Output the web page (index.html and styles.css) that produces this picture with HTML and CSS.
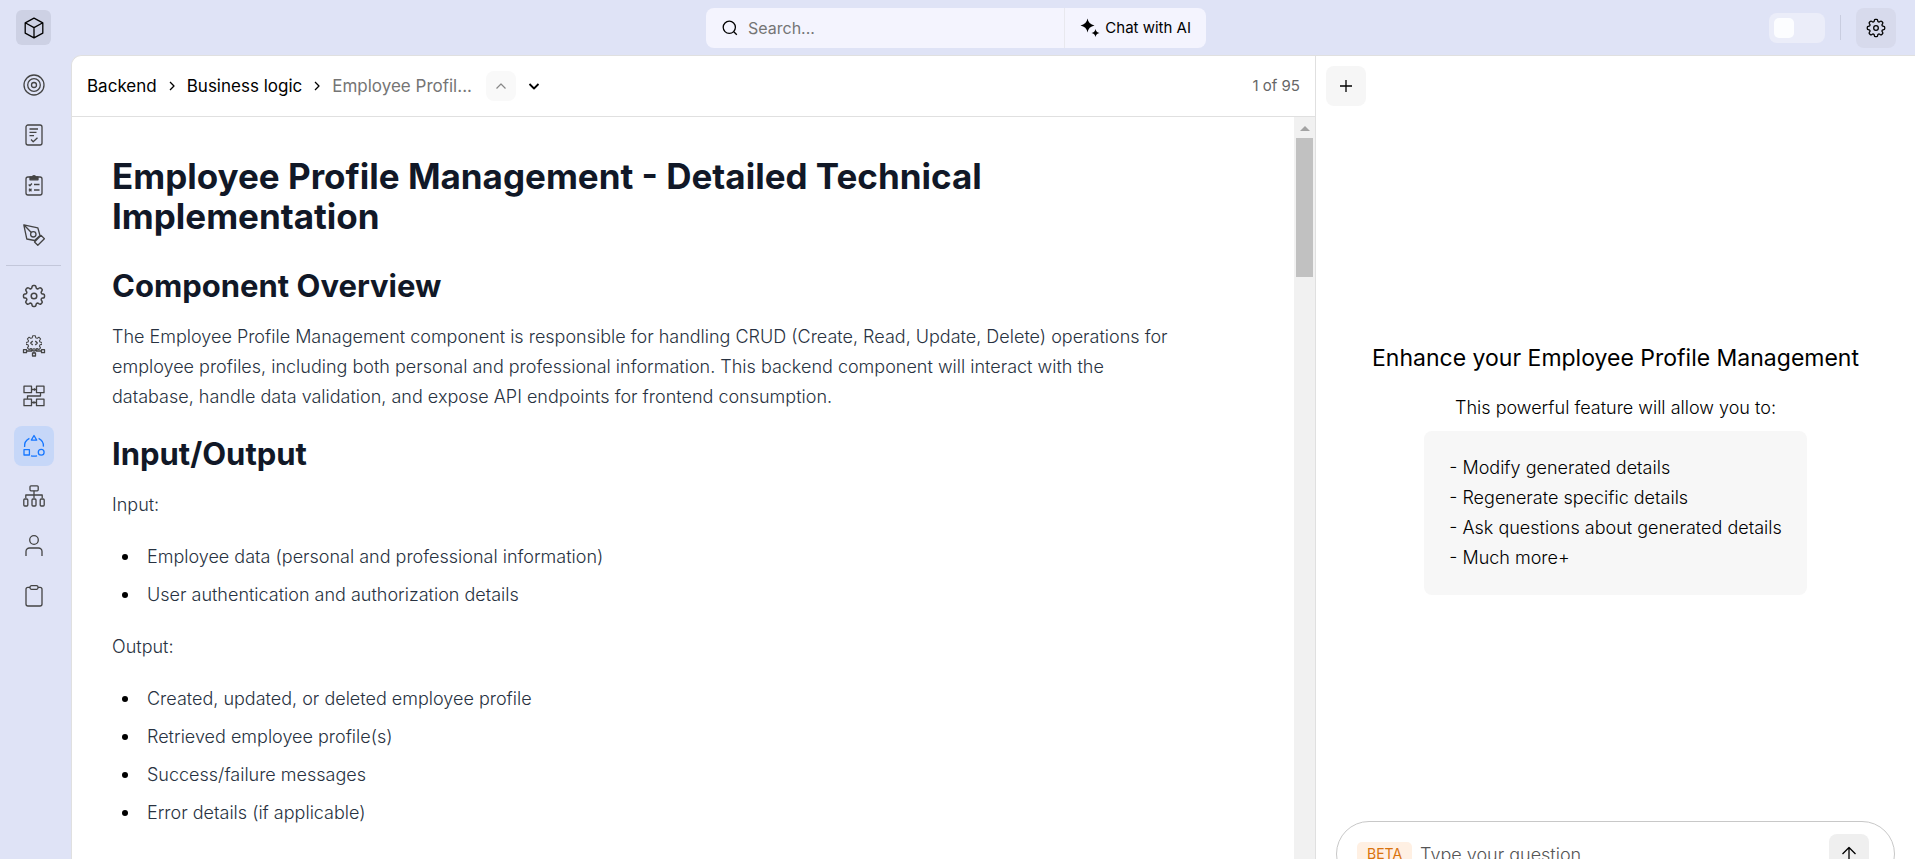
FILE: index.html
```html
<!DOCTYPE html>
<html lang="en">
<head>
    <meta charset="UTF-8">
    <meta name="viewport" content="width=device-width, initial-scale=1.0">
    <title>Employee Profile Management</title>
    <link rel="stylesheet" href="styles.css">
</head>
<body>

<svg class="sprite" aria-hidden="true">
    <symbol id="gear" viewBox="1.7 1.7 20.6 20.6">
        <path d="M10.343 3.94c.09-.542.56-.94 1.11-.94h1.093c.55 0 1.02.398 1.11.94l.149.894c.07.424.384.764.78.93.398.164.855.142 1.205-.108l.737-.527a1.125 1.125 0 011.45.12l.773.774c.39.389.44 1.002.12 1.45l-.527.737c-.25.35-.272.806-.107 1.204.165.397.505.71.93.78l.893.15c.543.09.94.56.94 1.109v1.094c0 .55-.397 1.02-.94 1.11l-.893.149c-.425.07-.765.383-.93.78-.165.398-.143.854.107 1.204l.527.738c.32.447.269 1.06-.12 1.45l-.774.773a1.125 1.125 0 01-1.449.12l-.738-.527c-.35-.25-.806-.272-1.203-.107-.397.165-.71.505-.781.929l-.149.894c-.09.542-.56.94-1.11.94h-1.094c-.55 0-1.019-.398-1.11-.94l-.148-.894c-.071-.424-.384-.764-.781-.93-.398-.164-.854-.142-1.204.108l-.738.527c-.447.32-1.06.269-1.45-.12l-.773-.774a1.125 1.125 0 01-.12-1.45l.527-.737c.25-.35.273-.806.108-1.204-.165-.397-.505-.71-.93-.78l-.894-.15c-.542-.09-.94-.56-.94-1.109v-1.094c0-.55.398-1.02.94-1.11l.894-.149c.424-.07.765-.383.93-.78.165-.398.143-.854-.107-1.204l-.527-.738a1.125 1.125 0 01.12-1.45l.773-.773a1.125 1.125 0 011.45-.12l.737.527c.35.25.807.272 1.204.107.397-.165.71-.505.78-.929l.15-.894z"/>
        <circle cx="12" cy="12" r="2.4"/>
    </symbol>
</svg>

<header class="topbar">
    <a class="logo" href="#" aria-label="Home">
        <svg class="icon" viewBox="0 0 24 24"><path d="M12 2.2l8.800 4.600v10.400L12 21.800l-8.800-4.600V6.800zM3.200 6.800L12 11.600l8.800-4.800M12 11.600v10.200"/></svg>
    </a>
    <div class="search">
        <label class="search-field">
            <svg class="icon-small" viewBox="0 0 16 16"><circle cx="7.3" cy="7.3" r="6.1"/><path d="M11.8 11.8l3 3"/></svg>
            <input type="text" placeholder="Search..." aria-label="Search">
        </label>
        <button class="chat-button">
            <svg class="icon-spark" viewBox="0 0 20 20"><path d="M7.500 .5q1 5.800 7 7q-6 1.200-7 7q-1-5.800-7-7q6-1.200 7-7zM15.500 11q.6 3.400 4 4q-3.400.6-4 4q-.6-3.400-4-4q3.400-.6 4-4z"/></svg>
            Chat with AI
        </button>
    </div>
    <div class="top-actions">
        <input class="toggle" type="checkbox" aria-label="Theme">
        <span class="top-line"></span>
        <button class="settings" aria-label="Settings"><svg class="icon-gear"><use href="#gear"/></svg></button>
    </div>
</header>

<div class="layout">
    <nav class="sidebar">
        <a href="#" aria-label="Goals"><svg class="icon" viewBox="0 0 24 24"><circle cx="12" cy="12" r="10"/><circle cx="12" cy="12" r="6.300"/><circle cx="12" cy="12" r="2.500"/></svg></a>
        <a href="#" aria-label="Requirements"><svg class="icon" viewBox="0 0 24 24"><rect x="4" y="2" width="16" height="20" rx="2"/><path d="M7.500 6h8.500M7.500 9.300h7M7.500 12.600h4.500M9 16.500l2.200 2.200 4.300-4"/></svg></a>
        <a href="#" aria-label="Checklist"><svg class="icon" viewBox="0 0 24 24"><rect x="4" y="4" width="16" height="18" rx="2"/><path class="filled" d="M8 6.800V4h2.200a1.900 1.900 0 0 1 3.600 0H16v2.800z"/><path d="M6.700 11.500l1.200 1.200 2-2.200M12 11.500h5.500M7 15.700l2.500 2.500M9.500 15.700L7 18.200M12 17h5.500"/></svg></a>
        <a href="#" aria-label="Design"><svg class="icon" viewBox="0 0 24 24"><path d="M1.800 1.800l14 3 2.200 7.700-5.400 5-7.800-1.500zM1.800 1.800l7.500 7.700M12.500 19l6.600-6.600 3.300 3.300-6.600 6.600z"/><circle cx="11.300" cy="11.300" r="2.700"/></svg></a>
        <hr>
        <a href="#" aria-label="Configuration"><svg class="icon"><use href="#gear"/></svg></a>
        <a href="#" aria-label="Services"><svg class="icon" viewBox="0 0 24 24"><svg x="4" y="1" width="16" height="16" viewBox="2 2 20 20"><path d="M10.300 3h3.400l.5 2.500 1.700.7 2.200-1.400 2.100 2.100-1.400 2.200.7 1.700 2.500.5v2.400l-2.500.5-.7 1.700 1.400 2.200-2.100 2.100-2.200-1.400-1.700.7-.5 2.500h-3.400l-.5-2.500-1.700-.7-2.200 1.400-2.100-2.100 1.400-2.200-.7-1.700-2.500-.5v-2.400l2.500-.5.7-1.700-1.400-2.200 2.100-2.100 2.200 1.400 1.700-.7z"/></svg><path d="M10.700 7L8.700 9l2 2M13.300 7l2 2-2 2M12 14v5M8.800 15l1.200 2H4.500M15.200 15L14 17h5.500M1.500 15.700h3v3h-3zM19.500 15.700h3v3h-3zM10.500 19h3v3h-3z"/></svg></a>
        <a href="#" aria-label="Data flow"><svg class="icon" viewBox="0 0 24 24"><path d="M2 2.200h7.500v6.500H2zM14.500 2.200H22v6.500h-7.500zM2 15.200h7.500v6.500H2zM14.500 15.200H22v6.500h-7.500zM9.500 5.500h5M9.500 18.500h5M18.500 8.700V12h-13v3M12 4.500l1.200 1-1.200 1M11.500 17.500l1.200 1-1.200 1"/></svg></a>
        <a class="active" href="#" aria-label="Business logic"><svg class="icon" viewBox="0 0 24 24"><path d="M12 1.500l2.700 4.600H9.300zM2 15.700h5.400V21H2zM7.400 4.300C4 6 2.200 9.300 2.600 13M16.600 4.300c3.400 1.700 5.200 5 4.800 8.400M9 21.800q3 .8 6 0"/><circle cx="19.200" cy="18.300" r="2.900"/></svg></a>
        <a href="#" aria-label="Architecture"><svg class="icon" viewBox="0 0 24 24"><rect x="8" y="1.800" width="8.200" height="5" rx="1"/><rect x="1.800" y="15" width="4" height="7" rx="1"/><rect x="10" y="15" width="4" height="7" rx="1"/><rect x="18.200" y="15" width="4" height="7" rx="1"/><path d="M12 6.800V11M3.800 14v-3h16.400v3M12 11v3"/></svg></a>
        <a href="#" aria-label="Users"><svg class="icon" viewBox="0 0 24 24"><circle cx="12" cy="6" r="4.300"/><path d="M4 22v-4.500a3.500 3.500 0 0 1 3.500-3.500h9a3.500 3.500 0 0 1 3.500 3.500V22"/></svg></a>
        <a href="#" aria-label="Notes"><svg class="icon" viewBox="0 0 24 24"><path d="M8 3.300H6a2 2 0 0 0-2 2V20a2 2 0 0 0 2 2h12a2 2 0 0 0 2-2V5.300a2 2 0 0 0-2-2h-2"/><rect x="8" y="1.700" width="8" height="3.600" rx="1.500"/></svg></a>
    </nav>

    <main class="document">
        <div class="document-header">
            <div class="breadcrumb">
                <a href="#">Backend</a>
                <svg class="chevron" viewBox="0 0 10 12"><path d="M3 2l4 4-4 4"/></svg>
                <a href="#">Business logic</a>
                <svg class="chevron" viewBox="0 0 10 12"><path d="M3 2l4 4-4 4"/></svg>
                <span class="current">Employee Profil...</span>
            </div>
            <button class="step" aria-label="Previous" disabled><svg class="arrow" viewBox="0 0 12 12"><path d="M1.500 8.500L6 4l4.500 4.500"/></svg></button>
            <button class="step" aria-label="Next"><svg class="arrow" viewBox="0 0 12 12"><path d="M1.500 4L6 8.500 10.500 4"/></svg></button>
            <span class="count">1 of 95</span>
        </div>
        <div class="document-body">
            <article>
                <h1>Employee Profile Management - Detailed Technical Implementation</h1>
                <h2>Component Overview</h2>
                <p>The Employee Profile Management component is responsible for handling CRUD (Create, Read, Update, Delete) operations for employee profiles, including both personal and professional information. This backend component will interact with the database, handle data validation, and expose API endpoints for frontend consumption.</p>
                <h2>Input/Output</h2>
                <p>Input:</p>
                <ul>
                    <li>Employee data (personal and professional information)</li>
                    <li>User authentication and authorization details</li>
                </ul>
                <p>Output:</p>
                <ul>
                    <li>Created, updated, or deleted employee profile</li>
                    <li>Retrieved employee profile(s)</li>
                    <li>Success/failure messages</li>
                    <li>Error details (if applicable)</li>
                </ul>
            </article>
            <div class="scrollbar">
                <svg class="scroll-arrow" viewBox="0 0 10 5"><path d="M5 0l5 5H0z"/></svg>
                <div class="thumb"></div>
            </div>
        </div>
    </main>

    <aside class="assistant">
        <div class="assistant-header">
            <button class="add" aria-label="New chat"><svg class="arrow" viewBox="0 0 12 12"><path d="M6 0v12M0 6h12"/></svg></button>
        </div>
        <div class="intro">
            <h3>Enhance your Employee Profile Management</h3>
            <p>This powerful feature will allow you to:</p>
            <div class="features">
                <div>- Modify generated details</div>
                <div>- Regenerate specific details</div>
                <div>- Ask questions about generated details</div>
                <div>- Much more+</div>
            </div>
        </div>
        <form class="question">
            <span class="beta">BETA</span>
            <input type="text" placeholder="Type your question" aria-label="Question">
            <button type="button" class="send" aria-label="Send"><svg class="icon-small" viewBox="0 0 16 16"><path d="M8 15V1.500M1.500 8L8 1.500 14.500 8"/></svg></button>
        </form>
    </aside>
</div>

</body>
</html>
```

FILE: styles.css
```css
* {
    box-sizing: border-box;
}

body {
    display: flex;
    flex-direction: column;
    height: 100vh;
    margin: 0;
    overflow: hidden;
    background-color: #dfe3f6;
    color: #000;
    font-family: Inter, "Liberation Sans", sans-serif;
    font-size: 18px;
    font-weight: 300;
    line-height: 30px;
}

h1, h2, h3, p, ul {
    margin: 0;
}

a {
    color: inherit;
    text-decoration: none;
}

button, input {
    font-family: inherit;
    color: inherit;
}

button {
    display: flex;
    align-items: center;
    justify-content: center;
    padding: 0;
    border: none;
    border-radius: 8px;
    background: none;
    cursor: pointer;
}

input[type="text"] {
    flex: 1;
    min-width: 0;
    padding: 0;
    border: none;
    outline: none;
    background: none;
}

input::placeholder {
    color: #757575;
    opacity: 1;
}

svg {
    flex-shrink: 0;
    fill: none;
    stroke: currentColor;
    stroke-width: 1.3;
    stroke-linejoin: round;
}

.sprite {
    display: none;
}

.icon {
    width: 24px;
    height: 24px;
}

.icon-small {
    width: 16px;
    height: 16px;
}

.icon-gear, .icon-spark {
    width: 20px;
    height: 20px;
}

.icon-spark, .filled {
    fill: currentColor;
}

.icon-spark {
    stroke: none;
}

/* Top bar */
.topbar {
    display: grid;
    grid-template-columns: 1fr 500px 1fr;
    align-items: center;
    height: 55px;
    flex-shrink: 0;
    padding: 0 19px 0 16px;
}

.logo {
    display: flex;
    align-items: center;
    justify-content: center;
    width: 35px;
    height: 35px;
    border-radius: 6px;
    background-color: #cdd1e4;
}

.search {
    display: flex;
    height: 40px;
    border-radius: 8px;
    background-color: #f4f4fe;
    font-size: 16px;
}

.search-field {
    display: flex;
    flex: 1;
    align-items: center;
    gap: 10px;
    padding: 0 16px;
}

.search input {
    font-size: 16px;
}

.chat-button {
    gap: 5px;
    padding: 0 15px;
    border-left: 1px solid #e8e8ee;
    border-radius: 0;
    font-size: 15px;
}

.top-actions {
    display: flex;
    align-items: center;
    justify-content: flex-end;
    gap: 15px;
}

.toggle {
    appearance: none;
    width: 56px;
    height: 30px;
    margin: 0;
    padding: 5px;
    border-radius: 8px;
    background-color: #ebedf9;
}

.toggle::before {
    content: "";
    display: block;
    width: 20px;
    height: 20px;
    border-radius: 5px;
    background-color: #fcfdff;
}

.top-line {
    width: 1px;
    height: 25px;
    background-color: #c9cde0;
}

.settings {
    width: 40px;
    height: 40px;
    background-color: #d7daec;
}

.layout {
    display: flex;
    flex: 1;
    min-height: 0;
}

/* Sidebar */
.sidebar {
    display: flex;
    flex-direction: column;
    align-items: center;
    gap: 10px;
    width: 71px;
    flex-shrink: 0;
    padding: 10px 4px 0 0;
    color: #444;
}

.sidebar a {
    display: flex;
    align-items: center;
    justify-content: center;
    width: 40px;
    height: 40px;
    border-radius: 8px;
}

.sidebar .active {
    background-color: #c6d7f8;
    color: #1677ff;
}

.sidebar hr {
    width: 55px;
    height: 1px;
    margin: 0;
    border: none;
    background-color: #c3c7da;
}

/* Document */
.document {
    display: flex;
    flex-direction: column;
    flex: 1;
    min-width: 0;
    border-top: 1px solid #e0e0e0;
    border-left: 1px solid #e0e0e0;
    border-top-left-radius: 10px;
    background-color: #fff;
}

.document-header {
    display: flex;
    align-items: center;
    height: 61px;
    flex-shrink: 0;
    padding: 0 15px;
    border-bottom: 1px solid #e0e0e0;
}

.breadcrumb {
    display: flex;
    align-items: center;
    gap: 10px;
    margin-right: 14px;
    font-size: 17px;
    font-weight: 400;
}

.chevron {
    width: 10px;
    height: 12px;
}

.current {
    color: #757575;
}

.arrow {
    width: 12px;
    height: 12px;
}

.step {
    width: 30px;
    height: 30px;
    margin-right: 3px;
}

.step .arrow {
    stroke-width: 1.8;
}

.step:disabled {
    background-color: #f9f9f9;
    color: #888;
}

.step:disabled .arrow {
    stroke-width: 1.2;
}

.count {
    margin-left: auto;
    color: #666;
    font-size: 15px;
    font-weight: 400;
}

.document-body {
    display: flex;
    flex: 1;
    min-height: 0;
    overflow: hidden;
}

article {
    flex: 1;
    padding: 39px 40px;
    color: #283241;
}

article > * {
    max-width: 1060px;
}

h1 {
    margin-bottom: 30px;
    color: #111827;
    font-size: 35px;
    line-height: 40px;
}

h2 {
    margin-bottom: 16px;
    color: #111827;
    font-size: 31px;
    line-height: 40px;
}

article p, article ul {
    margin-bottom: 22px;
}

ul {
    display: grid;
    gap: 8px;
    padding-left: 10px;
    list-style: none;
}

li {
    display: flex;
    align-items: center;
    gap: 19px;
}

li::before {
    content: "";
    width: 6px;
    height: 6px;
    border-radius: 50%;
    background-color: #000;
}

.scrollbar {
    display: flex;
    flex-direction: column;
    gap: 7px;
    width: 21px;
    padding: 9px 2px;
    background-color: #f1f1f1;
}

.scroll-arrow {
    align-self: center;
    width: 10px;
    height: 5px;
    fill: #a3a3a3;
    stroke: none;
}

.thumb {
    height: 139px;
    background-color: #c1c1c1;
}

/* Assistant */
.assistant {
    display: flex;
    flex-direction: column;
    width: 600px;
    flex-shrink: 0;
    border-top: 1px solid #e0e0e0;
    border-left: 1px solid #e0e0e0;
    background-color: #fff;
}

.assistant-header {
    padding: 10px;
}

.add {
    width: 40px;
    height: 40px;
    background-color: #f6f6f6;
}

.intro {
    display: flex;
    flex: 1;
    flex-direction: column;
    align-items: center;
    justify-content: center;
}

h3 {
    margin-bottom: 20px;
    font-size: 23px;
    font-weight: 400;
}

.features {
    margin-top: 8px;
    padding: 22px 25px;
    border-radius: 8px;
    background-color: #f7f7f7;
}

/* The question bar runs past the lower edge of the window */
.question {
    display: flex;
    align-items: center;
    gap: 8px;
    height: 66px;
    flex-shrink: 0;
    margin: 0 20px -28px;
    padding: 0 25px 0 20px;
    border: 1px solid #c8c8c8;
    border-radius: 33px;
}

.question input {
    font-size: 18px;
    font-weight: 300;
}

.question input::placeholder {
    color: #555;
}

.beta {
    padding: 0 10px;
    border-radius: 5px;
    background-color: #fff0e3;
    color: #d9730d;
    font-size: 14px;
    font-weight: 400;
    line-height: 24px;
}

.send {
    width: 40px;
    height: 40px;
    background-color: #efefef;
}
```
